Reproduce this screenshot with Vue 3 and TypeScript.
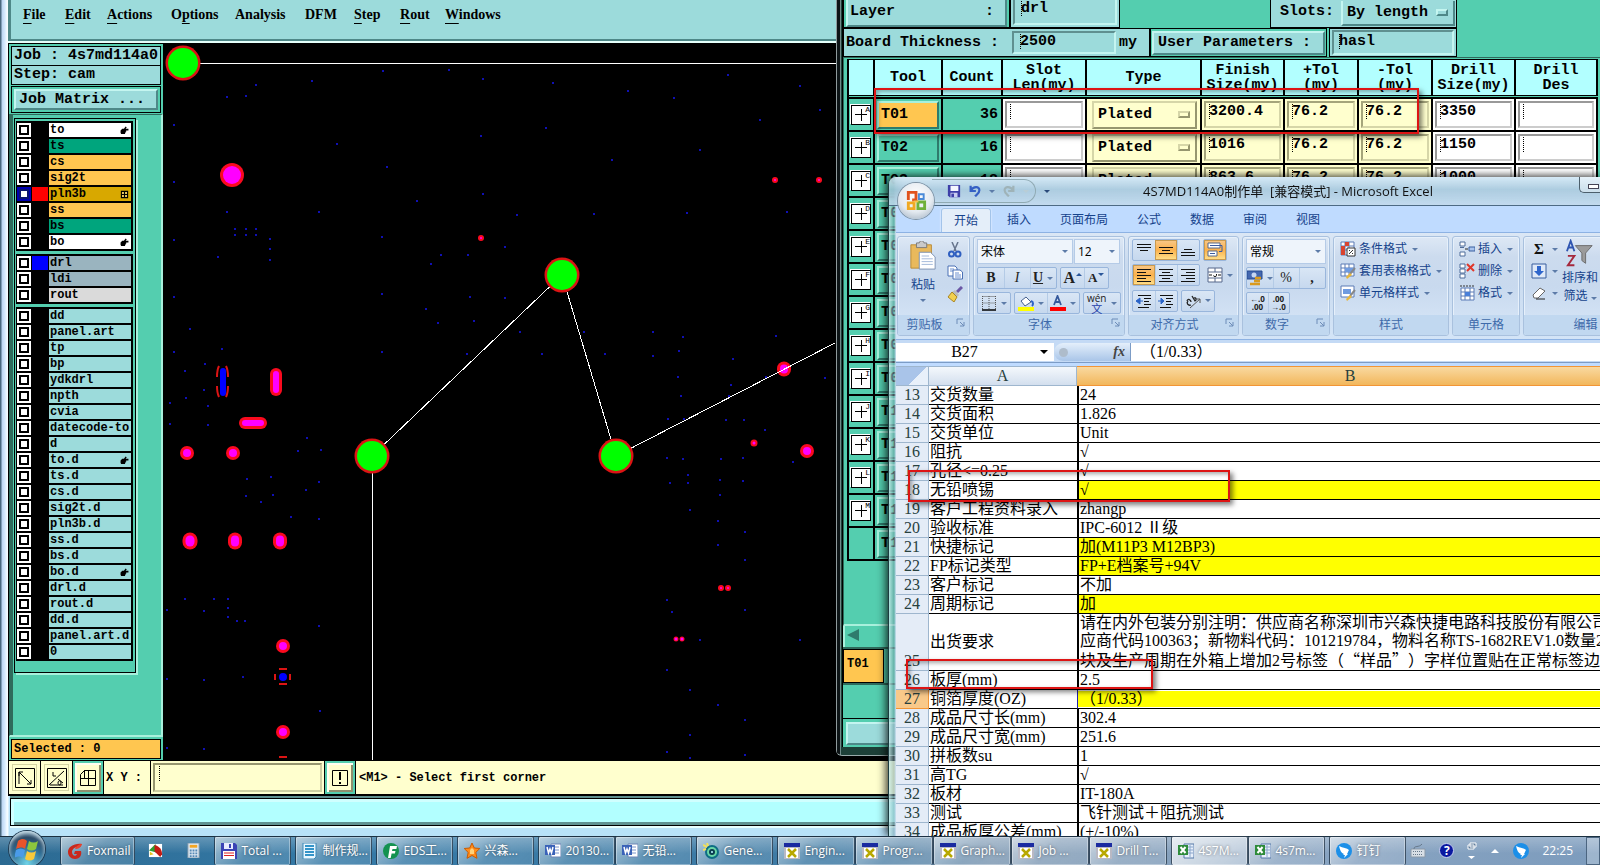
<script setup lang="ts">
interface Layer { name: string; tone: string; swatch?: string; mark?: string }
interface Tool { key: string; id: string; count?: string; finish?: string; drill?: string }
interface Task { label: string; icon: string; on?: boolean }

const menus = [
  ['F', 'ile', ''], ['E', 'dit', ''], ['A', 'ctions', ''], ['p', 'tions', 'O'],
  ['', 'Analysis', ''], ['', 'DFM', ''], ['S', 'tep', ''], ['R', 'out', ''], ['W', 'indows', ''],
]

const plain = (names: string[]): Layer[] => names.map((name) => ({ name, tone: 'aqua' }))

const layerGroups: Layer[][] = [
  [
    { name: 'to', tone: 'white', mark: 'hand' },
    { name: 'ts', tone: 'green' },
    { name: 'cs', tone: 'amber' },
    { name: 'sig2t', tone: 'amber' },
    { name: 'pln3b', tone: 'gold', swatch: 'red', mark: 'grid' },
    { name: 'ss', tone: 'amber' },
    { name: 'bs', tone: 'green' },
    { name: 'bo', tone: 'white', mark: 'hand' },
  ],
  [
    { name: 'drl', tone: 'steel', swatch: 'blue' },
    { name: 'ldi', tone: 'steel' },
    { name: 'rout', tone: 'grey' },
  ],
  [
    ...plain(['dd', 'panel.art', 'tp', 'bp', 'ydkdrl', 'npth', 'cvia', 'datecode-to', 'd']),
    { name: 'to.d', tone: 'aqua', mark: 'hand' },
    ...plain(['ts.d', 'cs.d', 'sig2t.d', 'pln3b.d', 'ss.d', 'bs.d']),
    { name: 'bo.d', tone: 'aqua', mark: 'hand' },
    ...plain(['drl.d', 'rout.d', 'dd.d', 'panel.art.d', '0']),
  ],
]

const holes: number[][] = [
  [227, 97], [246, 96], [256, 85], [312, 81], [383, 71], [449, 70], [483, 79], [174, 125], [337, 144], [481, 136],
  [387, 167], [174, 182], [417, 201], [483, 194], [227, 212], [319, 212], [517, 215], [235, 229], [246, 229], [256, 229],
  [235, 235], [246, 235], [256, 235], [270, 239], [270, 249], [270, 260], [174, 240], [382, 237], [218, 257], [505, 247],
  [441, 255], [468, 255], [431, 264], [174, 297], [382, 294], [190, 329], [174, 352], [222, 349], [382, 352], [205, 364],
  [185, 371], [204, 390], [186, 398], [208, 406], [170, 403], [170, 424], [208, 425], [307, 438], [298, 451], [321, 450],
  [247, 479], [271, 477], [319, 482], [306, 490], [246, 496], [273, 495], [261, 502], [291, 517], [319, 519], [185, 599],
  [214, 599], [228, 599], [228, 608], [228, 617], [237, 621], [245, 621], [167, 610], [204, 611], [319, 626], [167, 679],
  [204, 680], [243, 677], [320, 711], [167, 748], [204, 749], [594, 214], [687, 213], [787, 212], [470, 297], [505, 298],
  [426, 309], [438, 323], [474, 321], [520, 332], [584, 332], [653, 332], [683, 337], [776, 336], [679, 351], [653, 356],
  [467, 354], [542, 354], [605, 354], [733, 359], [678, 377], [825, 378], [731, 385], [766, 377], [729, 396], [681, 396],
  [668, 419], [684, 419], [726, 420], [744, 420], [765, 430], [667, 458], [683, 459], [721, 459], [743, 458], [793, 462],
  [688, 475], [670, 483], [688, 483], [720, 480], [743, 481], [720, 495], [667, 752], [690, 758], [745, 755],
  [553, 83], [628, 91], [674, 98], [728, 75], [800, 86], [546, 128], [612, 160], [700, 150], [760, 120], [820, 110],
  [690, 510], [718, 521], [745, 532], [718, 545], [745, 560], [667, 600], [672, 612], [700, 640], [745, 610], [800, 640],
  [667, 670], [690, 690], [718, 705], [745, 720], [690, 735],
]
const pads = [
  { x: 232, y: 175, w: 24, h: 24, c: 3 }, { x: 276, y: 382, w: 12, h: 28, c: 3 }, { x: 253, y: 423, w: 28, h: 12, c: 3 },
  { x: 187, y: 453, w: 14, h: 14, c: 3 }, { x: 233, y: 453, w: 14, h: 14, c: 3 }, { x: 190, y: 541, w: 15, h: 17, c: 3 },
  { x: 235, y: 541, w: 14, h: 17, c: 3 }, { x: 280, y: 541, w: 14, h: 17, c: 3 }, { x: 283, y: 646, w: 14, h: 14, c: 3 },
  { x: 283, y: 732, w: 14, h: 14, c: 3 }, { x: 784, y: 369, w: 14, h: 15, c: 3 }, { x: 807, y: 451, w: 14, h: 14, c: 3 },
  { x: 481, y: 238, w: 6, h: 6, c: 2 }, { x: 775, y: 180, w: 6, h: 6, c: 2 }, { x: 819, y: 180, w: 6, h: 6, c: 2 },
  { x: 754, y: 443, w: 7, h: 7, c: 2 }, { x: 721, y: 588, w: 6, h: 6, c: 2 }, { x: 728, y: 588, w: 6, h: 6, c: 2 },
  { x: 676, y: 639, w: 5, h: 5, c: 1 }, { x: 682, y: 639, w: 5, h: 5, c: 1 },
]
const nodes = [[183, 63], [562, 275], [372, 456], [616, 456]]

const heads = [[''], ['Tool'], ['Count'], ['Slot', 'Len(my)'], ['Type'], ['Finish', 'Size(my)'], ['+Tol', '(my)'], ['-Tol', '(my)'], ['Drill', 'Size(my)'], ['Drill', 'Des']]
const tools: Tool[] = [
  { key: 'A', id: 'T01', count: '36', finish: '3200.4', drill: '3350' },
  { key: 'B', id: 'T02', count: '16', finish: '1016', drill: '1150' },
  { key: 'C', id: 'T03', count: '18', finish: '863.6', drill: '1000' },
  ...'DEFGHIJKLM'.split('').map((key, i) => ({ key, id: 'T' + String(i + 4).padStart(2, '0') })),
  { key: '', id: 'T14' },
]

const tabs = ['开始', '插入', '页面布局', '公式', '数据', '审阅', '视图']

const sheet = [
  { n: 13, a: '交货数量', b: '24' }, { n: 14, a: '交货面积', b: '1.826' }, { n: 15, a: '交货单位', b: 'Unit' },
  { n: 16, a: '阻抗', b: '√' }, { n: 17, a: '孔径<=0.25', b: '√' }, { n: 18, a: '无铅喷锡', b: '√', y: true },
  { n: 19, a: '客户工程资料录入', b: 'zhangp' }, { n: 20, a: '验收标准', b: 'IPC-6012 Ⅱ级' },
  { n: 21, a: '快捷标记', b: '加(M11P3 M12BP3)', y: true }, { n: 22, a: 'FP标记类型', b: 'FP+E档案号+94V', y: true },
  { n: 23, a: '客户标记', b: '不加' }, { n: 24, a: '周期标记', b: '加', y: true },
  { n: 25, a: '出货要求', b: '请在内外包装分别注明：供应商名称深圳市兴森快捷电路科技股份有限公司\n应商代码100363；新物料代码：101219784，物料名称TS-1682REV1.0数量2\n块及生产周期在外箱上增加2号标签（“样品”）字样位置贴在正常标签边', tall: true },
  { n: 26, a: '板厚(mm)', b: '2.5' }, { n: 27, a: '铜箔厚度(OZ)', b: '（1/0.33）', y: true, sel: true },
  { n: 28, a: '成品尺寸长(mm)', b: '302.4' }, { n: 29, a: '成品尺寸宽(mm)', b: '251.6' }, { n: 30, a: '拼板数su', b: '1' },
  { n: 31, a: '高TG', b: '√' }, { n: 32, a: '板材', b: 'IT-180A' }, { n: 33, a: '测试', b: '飞针测试＋阻抗测试' },
  { n: 34, a: '成品板厚公差(mm)', b: '(+/-10%)' },
]
/* full-width quotes need the CJK face and are split into their own runs */
const runs = (s: string) => s.split(/(（“|”）)/).filter(Boolean)
const wide = (s: string) => /^(（“|”）)$/.test(s)

const taskGroups: Task[][] = [
  [{ label: 'Total ...', icon: 'disk' }],
  [{ label: '制作规...', icon: 'note' }],
  [{ label: 'EDS工...', icon: 'eds' }],
  [{ label: '兴森...', icon: 'star' }],
  [{ label: '20130...', icon: 'word' }, { label: '无铅...', icon: 'word' }],
  [{ label: 'Gene...', icon: 'gene' }],
  [{ label: 'Engin...', icon: 'xwin' }, { label: 'Progr...', icon: 'xwin' }, { label: 'Graph...', icon: 'xwin' }, { label: 'Job ...', icon: 'xwin' }, { label: 'Drill T...', icon: 'xwin' }],
  [{ label: '4S7M...', icon: 'excel', on: true }, { label: '4s7m...', icon: 'excel' }],
  [{ label: '钉钉', icon: 'ding' }],
]

const lines = (ys: number[][]) => ys.map(([x, y, w]) => `<path d="M${x} ${y}.5h${w}" stroke="#111" stroke-width="1"/>`).join('')

const icons: Record<string, string> = {
  hand: '<path d="M1 7l3-3h3l3-4 2 1-2 3h5v3h-4v2h-1v2H9v2H2L1 11z" fill="#000"/>',
  grid: '<path d="M2.5 1.5h11v11h-11zM8 1.500v11M2.500 7h11" fill="#ecc860" stroke="#000" stroke-width="2"/>',
  foxmail: '<path d="M15 1C7 0 1 4 1 9c0 4 3 7 7 7 5 0 7-4 6-8H8l-1 3h3c-1 3-5 2-5-2 0-3 4-6 8-5z" fill="#c9281c"/><path d="M15 1c-3 0-6 2-7 5 3 0 6-1 7-5z" fill="#e8442f"/>',
  rgb: '<path d="M1 1h14v14H1z" fill="#fff"/><path d="M1 8l7-7 1 9z" fill="#2e9e2e"/><path d="M7 2c5 1 8 5 8 10l-2 3-6-6z" fill="#c41c14"/><path d="M2 9l4 3-4 1z" fill="#e6c320"/>',
  calc: '<path d="M2 0h12v16H2z" fill="#dfe9f2" stroke="#7b93a8"/><path d="M4 2h8v3H4z" fill="#f5a623"/><path d="M4 8h8M4 11h8M4 14h8" stroke="#5588b5" stroke-width="2" stroke-dasharray="2 1"/>',
  disk: '<path d="M0 0h14l2 2v14H0z" fill="#3a43b5"/><path d="M3 0h9v6H3z" fill="#e8ecff"/><path d="M8 1h2v4H8z" fill="#3a43b5"/><path d="M2 8h12v8H2z" fill="#fff"/><path d="M3 10h10M3 12.500h10" stroke="#d22"/>',
  note: '<path d="M1 0h13v14l-2 2H1z" fill="#eaf7ff" stroke="#3d8ab8"/><path d="M3 3h9M3 6h9M3 9h9M3 12h9" stroke="#3494c9" stroke-width="2"/>',
  eds: '<circle cx="8" cy="8" r="8" fill="#149250"/><path d="M5 15L7 3h7l-.6 3H9.500L9 8h3.500l-.6 2.600H8.600L7.700 15z" fill="#fff"/>',
  star: '<path d="M8 0l2.300 5 5.500.5-4 3.900 1.200 5.900L8 12.500l-5 2.800 1.200-5.900-4-3.900L5.700 5z" fill="#ff8c1a" stroke="#c95a00"/><path d="M6 7l2-2 2 2v4H6z" fill="#ffd27a"/>',
  word: '<path d="M6 1h10v13H6z" fill="#fff" stroke="#6f86b6"/><path d="M8 4h6M8 7h6M8 10h6" stroke="#7d96cc"/><path d="M0 2h10v10H0z" fill="#3a62b8"/><path d="M2 4l1.500 6L5 6l1.500 4L8 4" fill="none" stroke="#fff" stroke-width="1.500"/>',
  gene: '<circle cx="9" cy="9" r="7" fill="#0e6d84"/><circle cx="9" cy="9" r="5" fill="#69d6a6"/><circle cx="9" cy="9" r="3" fill="#0a3b50"/><circle cx="9" cy="9" r="1" fill="#bff"/><path d="M0 2l4 2M4 0l1 3M0 7l3-1" stroke="#f3e15a" stroke-width="2"/>',
  xwin: '<path d="M0 0h16v16H0z" fill="#b9b9c4"/><path d="M0 0h16v4H0z" fill="#1a2ba0"/><path d="M2 5h12v10H2z" fill="#fff"/><path d="M4 6l8 8M12 6l-8 8" stroke="#b8a800" stroke-width="2.500"/>',
  excel: '<path d="M6 1h10v14H6z" fill="#e8f0fb" stroke="#5578a8"/><path d="M8 4h7M8 7h7M8 10h7M12 2v12" stroke="#8aa6cc"/><path d="M0 2h10v10H0z" fill="#2e8b3a"/><path d="M2.500 4l5 6M7.500 4l-5 6" stroke="#fff" stroke-width="2"/>',
  ding: '<circle cx="8" cy="8" r="8" fill="#1c8fe8"/><path d="M3 3c4 2 8 2 10 4-1 1-1 3-2 4l1 0-4 4 1-3H7l1-1C5 10 4 7 3 3z" fill="#fff"/>',
  save: '<path d="M1 1h14v14H3l-2-2z" fill="#3d3fa8"/><path d="M4 2h9v6H4z" fill="#f4f6ff"/><path d="M4 10h8v5H4z" fill="#c9cdf0"/><path d="M5 11h3v4H5z" fill="#3d3fa8"/>',
  undo: '<path d="M3 2v6h6M3.500 7C6 3 13 2 13 7c0 4-3 5-5 7" fill="none" stroke="#3560c4" stroke-width="2.500"/>',
  redo: '<path d="M13 2v6H7M12.500 7C10 3 3 2 3 7c0 4 3 5 5 7" fill="none" stroke="#9fb3b8" stroke-width="2.500"/>',
  paste: '<path d="M2 4h22v25H2z" fill="#e9b95c" stroke="#b98a35"/><path d="M8 2h3c0-3 5-3 5 0h3v5H8z" fill="#c9c9c9" stroke="#777"/><path d="M11 12h12l5 5v13H11z" fill="#fff" stroke="#7a8fb0"/><path d="M13.500 16h8M13.500 19h12M13.500 22h12M13.500 25h12" stroke="#9fb6d8"/>',
  cut: '<path d="M5 0l4 9M11 0L7 9" stroke="#66748c" stroke-width="1.500"/><circle cx="4.500" cy="12" r="2.500" fill="none" stroke="#2f5fc0" stroke-width="2"/><circle cx="11" cy="12" r="2.500" fill="none" stroke="#2f5fc0" stroke-width="2"/>',
  copy: '<path d="M1 2h7l2 2v8H1z" fill="#fff" stroke="#4a70b5"/><path d="M3 5h4M3 7h4" stroke="#6c90d0"/><path d="M6 6h7l2.500 2v7H6z" fill="#fff" stroke="#4a70b5"/><path d="M8 9h4M8 11h6M8 13h6" stroke="#6c90d0"/>',
  brush: '<path d="M15 1l-5 5" stroke="#6a57a5" stroke-width="3"/><path d="M8 4l4 5-2 2-5-5z" fill="#bbb"/><path d="M5 6l5 5-3 5-6-5z" fill="#f2cf4f" stroke="#a98524"/>',
  border: '<path d="M1.500 1.500h13M1.500 8h13M1.500 1v13M8 1v13M14.500 1v13" stroke="#555" stroke-dasharray="1 1" fill="none"/><path d="M1 15h14" stroke="#000" stroke-width="1.500"/>',
  fill: '<path d="M3 6l5-4 5 5-6 4z" fill="#fff" stroke="#46618f"/><path d="M13 6c3 1 2 4 1 5" fill="none" stroke="#2e63c7" stroke-width="2"/><path d="M0 12h16v4H0z" fill="#ff0"/>',
  ink: '<path d="M4 10L7.500 1 11 10M5.500 7h4" fill="none" stroke="#35599c" stroke-width="1.800"/><path d="M0 12h16v4H0z" fill="#f00"/>',
  top: lines([[1, 2, 14], [1, 5, 14], [4, 8, 8]]),
  mid: lines([[1, 5, 14], [4, 8, 8], [1, 11, 14]]),
  bot: lines([[4, 7, 8], [1, 10, 14], [1, 13, 14]]),
  left: lines([[1, 2, 14], [1, 5, 9], [1, 8, 14], [1, 11, 9], [1, 14, 14]]),
  center: lines([[1, 2, 14], [4, 5, 8], [1, 8, 14], [4, 11, 8], [1, 14, 14]]),
  right: lines([[1, 2, 14], [6, 5, 9], [1, 8, 14], [6, 11, 9], [1, 14, 14]]),
  outdent: lines([[2, 2, 13], [8, 5, 7], [8, 8, 5], [8, 11, 7], [2, 14, 11]]) + '<path d="M0 8l4-3v6zM3 8h4" fill="#2a64c8" stroke="#2a64c8"/>',
  indent: lines([[2, 2, 13], [8, 5, 7], [8, 8, 5], [8, 11, 7], [2, 14, 11]]) + '<path d="M6 8L3 5v6zM0 8h4" fill="#2a64c8" stroke="#2a64c8"/>',
  wrap: '<path d="M1 1h12v5H1zM1 9h9v5H1z" fill="#fff" stroke="#56698c"/><path d="M3 3.500h12v6h-3M3 11.500h5" fill="none" stroke="#3a5aa0"/>',
  merge: '<path d="M1 1h14v14H1zM8 1v4M8 11v4M1 5h14M1 11h14" fill="#fff" stroke="#56698c"/><path d="M2 8h3M11 8h3M6.500 8.500a1.500 1 0 1 0 3 0V7" fill="none" stroke="#111"/>',
  orient: '<path d="M2 8c1-3 4-1 4 1M6 12c-3 1-5-2-3-4M7 3l3 5c2-1 1-4-1-3" fill="none" stroke="#222" stroke-width="1.300"/><path d="M5 15L15 6m0 0h-4m4 0v4" stroke="#555" fill="none"/>',
  money: '<path d="M0 1h15v8H0z" fill="#4468b0" stroke="#274a90"/><circle cx="7" cy="5" r="2.500" fill="#c6d6f2"/><path d="M8 8h6M7 11h6M3 14h10" stroke="#d99a1e" stroke-width="2.500"/>',
  cond: '<path d="M1 1h13v13H1zM5 1v13M9 1v13M1 5h13M1 9h13" fill="#fff" stroke="#5b7bb5"/><path d="M5 1h4v4H5zM1 5h4v9H1z" fill="#d8432f"/><path d="M7 7h8v8H7z" fill="#fff" stroke="#333"/><path d="M9 13l4-4M9 9.500h1M12 12.500h1" stroke="#333"/>',
  tfmt: '<path d="M1 1h13v12H1zM5 1v12M9 1v12M1 5h13M1 9h13" fill="#fff" stroke="#5b7bb5"/><path d="M5 5h9v4H5z" fill="#6f9be0"/><path d="M15 5l-5 6" stroke="#888" stroke-width="2"/><path d="M10 10l2 2-5 4-1-2z" fill="#e8b63a"/>',
  cfmt: '<path d="M1 1h13v11H1z" fill="#fff" stroke="#5b7bb5"/><path d="M3 4h8v5H3z" fill="#6f9be0"/><path d="M15 5l-5 6" stroke="#888" stroke-width="2"/><path d="M10 10l2 2-5 4-1-2z" fill="#e8b63a"/>',
  ins: '<path d="M1 1h5v4H1zM1 11h5v4H1z" fill="#fff" stroke="#4f6c9a"/><path d="M1 6.500h4" stroke="#4f6c9a"/><path d="M6 8h3" stroke="#222"/><path d="M10 6h6v4h-6z" fill="#a9c4ee" stroke="#385f9f"/>',
  del: '<path d="M1 1h5v4H1zM1 6h5v4H1zM1 11h5v4H1z" fill="#fff" stroke="#4f6c9a"/><path d="M8 1l7 7M15 1L8 8" stroke="#e0372a" stroke-width="2"/>',
  fmt: '<path d="M2 3h13v12H2zM2 7h13M2 11h13M6 3v12M11 3v12" fill="#fff" stroke="#5b7bb5"/><path d="M6 7h5v4H6z" fill="#4a7fd8"/><path d="M1 1h15" stroke="#333" stroke-dasharray="2 1"/>',
  down: '<path d="M1 1h14v14H1z" fill="#dfe9f8" stroke="#385f9f"/><path d="M6 3h4v5h3l-5 5-5-5h3z" fill="#2f66cc"/>',
  erase: '<path d="M2 10l7-7 5 3-7 7-4 0z" fill="#fff" stroke="#666"/><path d="M5 14h9" stroke="#222"/>',
  sort: '<path d="M1 12L5 1l4 11M3 8h4" fill="none" stroke="#2f55b0" stroke-width="2"/><path d="M2 17h7L2 27h7" fill="none" stroke="#a5283c" stroke-width="2"/><path d="M10 6h18l-7 8v11l-4-3v-8z" fill="#9b9b9b" stroke="#6b6b6b"/>',
  launch: '<path d="M1 6V1h6" fill="none" stroke="#6d8cb8"/><path d="M4 4l4 4M8 4v4H4" fill="none" stroke="#6d8cb8"/>',
  flag: '<path d="M2 6c4-3 7-2 9 0l-2 8c-2-2-5-2-9 0z" fill="#e8542a"/><path d="M13 6c3 2 6 2 9 0l-2 8c-3 2-6 2-9 0z" fill="#8cc63e"/><path d="M0 15c3-2 6-2 9 0l-2 8c-3-2-5-2-9 0z" fill="#4a9be8"/><path d="M11 16c3 2 6 2 9 0l-2 8c-3 2-6 2-9 0z" fill="#f8c93a"/>',
  office: '<path d="M4.500 11.500v-8h8v8h-4" fill="none" stroke="#e0531e" stroke-width="3"/><path d="M15.500 5.500h5v5h-5z" fill="none" stroke="#4a8ad8" stroke-width="2"/><path d="M4.500 14.500h6v6h-6z" fill="none" stroke="#f0a922" stroke-width="3"/><path d="M14.500 13.500h7v7h-7z" fill="none" stroke="#6fb03a" stroke-width="3"/><path d="M10 12h5v2h-5z" fill="#f6c34a"/>',
  keyb: '<path d="M1 6h14v8H1z" fill="#d8dfe6" stroke="#8a99a8"/><path d="M3 8.500h10M3 11.500h10" stroke="#66788a" stroke-dasharray="1 1"/><path d="M4 6c0-4 5-1 8-5" fill="none" stroke="#66788a"/>',
}
</script>

<template>
  <div class="desktop">
    <main class="workspace">
      <section class="genesis" aria-label="Graphic editor">
        <nav class="menubar">
          <a v-for="m in menus" :key="m.join('')" href="#">{{ m[2] }}<u>{{ m[0] }}</u>{{ m[1] }}</a>
        </nav>
        <div class="body">
          <aside class="side">
            <div class="job">
              <div class="jobline">Job : 4s7md114a0</div>
              <div class="jobline">Step: cam</div>
            </div>
            <div class="matrix"><button type="button">Job Matrix ...</button></div>
            <div class="layers">
              <div class="layerbox">
                <div v-for="(g, gi) in layerGroups" :key="gi" class="group">
                  <div v-for="l in g" :key="l.name" class="layer">
                    <input :id="'ly-' + l.name" type="checkbox" :class="{ work: l.swatch === 'red' }">
                    <span class="swatch" :class="l.swatch"></span>
                    <label :for="'ly-' + l.name" :class="l.tone">{{ l.name }}<svg v-if="l.mark" viewBox="0 0 16 14" v-html="icons[l.mark]"></svg></label>
                  </div>
                </div>
              </div>
            </div>
            <div class="selected"><div>Selected : 0</div></div>
          </aside>
          <svg class="canvas">
            <g transform="translate(-163 -43)">
              <rect v-for="(p, i) in holes" :key="i" :x="p[0] - 1" :y="p[1] - 1" width="2" height="2" fill="#1010b4" />
              <g v-for="(p, i) in pads" :key="'p' + i">
                <rect :x="p.x - p.w / 2" :y="p.y - p.h / 2" :width="p.w" :height="p.h" :rx="Math.min(p.w, p.h) / 2" fill="#fa0a1e" />
                <rect :x="p.x - p.w / 2 + p.c" :y="p.y - p.h / 2 + p.c" :width="p.w - p.c * 2" :height="p.h - p.c * 2" :rx="Math.min(p.w, p.h) / 2 - p.c" fill="#f0f" />
              </g>
              <rect x="220" y="368" width="6" height="28" rx="3" fill="#00f" />
              <path d="M219 366q-2 4-2 11M217 386q0 7 2 11M226 366q2 4 2 11M228 386q0 7-2 11" fill="none" stroke="#dc1414" stroke-width="2" />
              <circle cx="283" cy="677" r="4" fill="#00f" />
              <path d="M279 669h8M279 684h8M275 674v6M290 674v6M279 757h8" stroke="#dc1414" stroke-width="2" />
              <path d="M183 63.500H2000M372.500 456V900M372 456L562 275L616 456L835 343" fill="none" stroke="#fff" shape-rendering="crispEdges" />
              <g v-for="(n, i) in nodes" :key="'n' + i">
                <circle :cx="n[0]" :cy="n[1]" r="17.5" fill="#dc1414" />
                <circle :cx="n[0]" :cy="n[1]" r="15" fill="#0f0" />
              </g>
            </g>
          </svg>
        </div>
        <div class="status">
          <button type="button" aria-label="Zoom area"><svg viewBox="0 0 20 20"><path d="M.5.5h19v19H.5zM4 16V4l12 12M4 8V4h4M16 12v4h-4" fill="none" stroke="#000" /></svg></button>
          <button type="button" aria-label="Angle snap"><svg viewBox="0 0 20 20"><path d="M.5.5h19v19H.5zM2 17L17 3M6 4v4h3M3 17h13M11 11l5 4M11 15c0-3 3-3 3 0s-3 2-3 0" fill="none" stroke="#000" /></svg></button>
          <button type="button" class="green" aria-label="Grid snap"><svg viewBox="0 0 20 20"><path d="M2.500 6.500l4-4h11v15h-15zM10.500 2v16M2 10.500h16M6.500 2v8" fill="none" stroke="#000" /></svg></button>
          <label class="xy" for="xy">X Y :</label>
          <div class="xyfield"><span class="well"><i class="caret"></i><input id="xy" type="text"></span></div>
          <button type="button" class="green" aria-label="Apply"><svg viewBox="0 0 20 20"><path d="M2.500 2.500h15v15h-15z" fill="none" stroke="#000" /><path d="M10 4v8M10 14v2" stroke="#000" stroke-width="2" /></svg></button>
          <p>&lt;M1&gt; - Select first corner</p>
        </div>
        <div class="message"></div>
      </section>

      <section class="drill" aria-label="Drill tools manager">
        <div class="pane">
          <div class="row first">
            <div class="cell layerlabel"><button type="button"><span>Layer</span><span>:</span></button></div>
            <div class="cell entry layerentry"><span class="well"><i class="caret"></i><input type="text" value="drl" aria-label="Layer"></span></div>
            <div class="cell slots">
              <label for="slots">Slots:</label>
              <span class="option"><select id="slots"><option>By length</option></select><b></b></span>
            </div>
          </div>
          <div class="row second">
            <div class="cell thick">
              <label for="bt">Board Thickness :</label>
              <span class="well"><i class="caret"></i><input id="bt" type="text" value="2500"></span>my
            </div>
            <div class="cell params"><button type="button">User Parameters :</button></div>
            <div class="cell entry paramentry"><span class="well"><i class="caret"></i><input type="text" value="hasl" aria-label="User parameters"></span></div>
          </div>
          <div class="tablewrap">
            <table class="tools">
              <colgroup>
                <col class="c26"><col class="c68"><col class="c60"><col class="c84"><col class="c115">
                <col class="c83"><col class="c74"><col class="c74"><col class="c83"><col class="c82">
              </colgroup>
              <thead>
                <tr><th v-for="(h, i) in heads" :key="i"><div v-for="t in h" :key="t">{{ t }}</div></th></tr>
              </thead>
              <tbody>
                <tr class="gap"><td colspan="10"></td></tr>
                <tr v-for="(t, i) in tools" :key="t.id">
                  <td><span v-if="t.key" class="sym"><small>{{ t.key }}</small></span></td>
                  <td><button type="button" class="tool" :class="{ cur: i === 0 }">{{ t.id }}</button></td>
                  <template v-if="t.count">
                    <td class="num">{{ t.count }}</td>
                    <td class="w"><span class="well"><i class="caret"></i><input type="text" aria-label="Slot length"></span></td>
                    <td class="y"><span class="option"><select aria-label="Type"><option>Plated</option></select><b></b></span></td>
                    <td class="y"><span class="well"><i class="caret"></i><input type="text" :value="t.finish" aria-label="Finish size"></span></td>
                    <td class="y"><span class="well"><i class="caret"></i><input type="text" value="76.2" aria-label="Plus tolerance"></span></td>
                    <td class="y"><span class="well"><i class="caret"></i><input type="text" value="76.2" aria-label="Minus tolerance"></span></td>
                    <td class="w"><span class="well"><i class="caret"></i><input type="text" :value="t.drill" aria-label="Drill size"></span></td>
                    <td class="w"><span class="well"><i class="caret"></i><input type="text" aria-label="Drill designator"></span></td>
                  </template>
                </tr>
              </tbody>
            </table>
          </div>
          <div class="hscroll"><i></i></div>
          <div class="current"><span>T01</span></div>
          <div class="blank"></div>
          <div class="closebar"><button type="button" aria-label="Close"></button></div>
        </div>
      </section>

      <section class="excel" aria-label="Microsoft Excel">
        <header class="title">
          <button type="button" class="orb" aria-label="Office"><svg viewBox="0 0 25 25" v-html="icons.office"></svg></button>
          <div class="qat">
            <button type="button" aria-label="保存"><svg viewBox="0 0 16 16" v-html="icons.save"></svg></button>
            <button type="button" aria-label="撤消"><svg viewBox="0 0 16 16" v-html="icons.undo"></svg></button>
            <i class="dd"></i>
            <button type="button" aria-label="恢复"><svg viewBox="0 0 16 16" v-html="icons.redo"></svg></button>
            <i class="dd faint"></i>
          </div>
          <i class="dd more"></i>
          <h1>4S7MD114A0制作单&nbsp; [兼容模式] - Microsoft Excel</h1>
          <button type="button" class="min" aria-label="最小化"><i></i></button>
        </header>
        <div class="frame">
          <nav class="tabs"><a v-for="(t, i) in tabs" :key="t" href="#" :class="{ on: i === 0 }">{{ t }}</a></nav>
          <div class="ribbon">
            <div class="rg clip">
              <div class="rc">
                <button type="button" class="big"><svg class="i30" viewBox="0 0 30 32" v-html="icons.paste"></svg>粘贴<i class="dd"></i></button>
                <div class="stack">
                  <button type="button" aria-label="剪切"><svg viewBox="0 0 16 16" v-html="icons.cut"></svg></button>
                  <button type="button" aria-label="复制"><svg viewBox="0 0 16 16" v-html="icons.copy"></svg></button>
                  <button type="button" aria-label="格式刷"><svg viewBox="0 0 16 16" v-html="icons.brush"></svg></button>
                </div>
              </div>
              <footer class="l">剪贴板<svg viewBox="0 0 9 9" v-html="icons.launch"></svg></footer>
            </div>
            <div class="rg font">
              <div class="rc rows">
                <div class="line joined">
                  <span class="combo fname"><select aria-label="字体"><option>宋体</option></select><i class="dd"></i></span>
                  <span class="combo fsize"><select aria-label="字号"><option>12</option></select><i class="dd"></i></span>
                </div>
                <div class="line">
                  <div class="bar b80"><button type="button"><b>B</b></button><button type="button"><em>I</em></button><button type="button"><u><b>U</b></u><i class="dd"></i></button></div>
                  <div class="bar"><button type="button" aria-label="增大字号"><b class="ga">A</b><i class="du"></i></button><button type="button" aria-label="减小字号"><b class="gb">A</b><i class="du dn"></i></button></div>
                </div>
                <div class="line">
                  <div class="bar"><button type="button" aria-label="边框"><svg viewBox="0 0 16 16" v-html="icons.border"></svg><i class="dd"></i></button></div>
                  <div class="bar"><button type="button" aria-label="填充颜色"><svg viewBox="0 0 16 16" v-html="icons.fill"></svg><i class="dd"></i></button><button type="button" aria-label="字体颜色"><svg viewBox="0 0 16 16" v-html="icons.ink"></svg><i class="dd"></i></button></div>
                  <div class="bar"><button type="button"><span class="wen"><span>wén</span>文</span><i class="dd"></i></button></div>
                </div>
              </div>
              <footer class="l">字体<svg viewBox="0 0 9 9" v-html="icons.launch"></svg></footer>
            </div>
            <div class="rg align">
              <div class="rc rows">
                <div class="line">
                  <div class="bar"><button type="button" aria-label="顶端对齐"><svg viewBox="0 0 16 16" v-html="icons.top"></svg></button><button type="button" class="hot" aria-label="垂直居中"><svg viewBox="0 0 16 16" v-html="icons.mid"></svg></button><button type="button" aria-label="底端对齐"><svg viewBox="0 0 16 16" v-html="icons.bot"></svg></button></div>
                  <div class="bar"><button type="button" class="hot" aria-label="自动换行"><svg viewBox="0 0 16 16" v-html="icons.wrap"></svg></button></div>
                </div>
                <div class="line">
                  <div class="bar"><button type="button" class="hot" aria-label="左对齐"><svg viewBox="0 0 16 16" v-html="icons.left"></svg></button><button type="button" aria-label="居中"><svg viewBox="0 0 16 16" v-html="icons.center"></svg></button><button type="button" aria-label="右对齐"><svg viewBox="0 0 16 16" v-html="icons.right"></svg></button></div>
                  <div class="bar bare"><button type="button" aria-label="合并"><svg viewBox="0 0 16 16" v-html="icons.merge"></svg><i class="dd"></i></button></div>
                </div>
                <div class="line">
                  <div class="bar"><button type="button" aria-label="减少缩进"><svg viewBox="0 0 16 16" v-html="icons.outdent"></svg></button><button type="button" aria-label="增加缩进"><svg viewBox="0 0 16 16" v-html="icons.indent"></svg></button></div>
                  <div class="bar"><button type="button" aria-label="方向"><svg viewBox="0 0 16 16" v-html="icons.orient"></svg><i class="dd"></i></button></div>
                </div>
              </div>
              <footer class="l">对齐方式<svg viewBox="0 0 9 9" v-html="icons.launch"></svg></footer>
            </div>
            <div class="rg number">
              <div class="rc rows">
                <div class="line"><span class="combo fnum"><select aria-label="数字格式"><option>常规</option></select><i class="dd"></i></span></div>
                <div class="line"><div class="bar wide"><button type="button" aria-label="会计数字格式"><svg viewBox="0 0 16 16" v-html="icons.money"></svg><i class="dd"></i></button><button type="button">%</button><button type="button"><b>,</b></button></div></div>
                <div class="line"><div class="bar"><button type="button" class="dec"><span>←.0<br>.00</span></button><button type="button" class="dec"><span>.00<br>→.0</span></button></div></div>
              </div>
              <footer class="l">数字<svg viewBox="0 0 9 9" v-html="icons.launch"></svg></footer>
            </div>
            <div class="rg styles">
              <div class="rc list">
                <button type="button"><svg viewBox="0 0 16 16" v-html="icons.cond"></svg>条件格式<i class="dd"></i></button>
                <button type="button"><svg viewBox="0 0 16 16" v-html="icons.tfmt"></svg>套用表格格式<i class="dd"></i></button>
                <button type="button"><svg viewBox="0 0 16 16" v-html="icons.cfmt"></svg>单元格样式<i class="dd"></i></button>
              </div>
              <footer>样式</footer>
            </div>
            <div class="rg cells">
              <div class="rc list">
                <button type="button"><svg viewBox="0 0 16 16" v-html="icons.ins"></svg>插入<i class="dd"></i></button>
                <button type="button"><svg viewBox="0 0 16 16" v-html="icons.del"></svg>删除<i class="dd"></i></button>
                <button type="button"><svg viewBox="0 0 16 16" v-html="icons.fmt"></svg>格式<i class="dd"></i></button>
              </div>
              <footer>单元格</footer>
            </div>
            <div class="rg edit">
              <div class="rc">
                <div class="list">
                  <button type="button"><b class="sigma">Σ</b><i class="dd"></i></button>
                  <button type="button" aria-label="填充"><svg viewBox="0 0 16 16" v-html="icons.down"></svg><i class="dd"></i></button>
                  <button type="button" aria-label="清除"><svg viewBox="0 0 16 16" v-html="icons.erase"></svg><i class="dd"></i></button>
                </div>
                <button type="button" class="big"><svg class="i30" viewBox="0 0 30 30" v-html="icons.sort"></svg>排序和<span>筛选 <i class="dd"></i></span></button>
              </div>
              <footer>编辑</footer>
            </div>
          </div>
          <div class="formula">
            <div class="namebox"><input type="text" value="B27" aria-label="名称框"><i class="dd dark"></i></div>
            <div class="fx"><i></i><em>fx</em></div>
            <input class="fin" type="text" value="（1/0.33）" aria-label="编辑栏">
          </div>
          <div class="grid">
            <table>
              <colgroup><col class="cn"><col class="ca"><col></colgroup>
              <thead><tr><th class="corner"></th><th>A</th><th class="hotcol">B</th></tr></thead>
              <tbody>
                <tr v-for="r in sheet" :key="r.n" :class="{ tall: r.tall, sel: r.sel }">
                  <th>{{ r.n }}</th><td>{{ r.a }}</td><td class="b" :class="{ hl: r.y }"><span v-for="(s, i) in runs(r.b)" :key="i" :class="{ cjk: wide(s) }">{{ s }}</span></td>
                </tr>
              </tbody>
            </table>
          </div>
        </div>
      </section>

      <i class="mark m1"></i><i class="mark m2"></i><i class="mark m3"></i>
    </main>

    <footer class="taskbar">
      <button type="button" class="start" aria-label="开始菜单"><svg viewBox="-1 3 24 22" v-html="icons.flag"></svg></button>
      <button type="button" class="task"><svg viewBox="0 0 16 16" v-html="icons.foxmail"></svg>Foxmail</button>
      <button type="button" class="pin" aria-label="Palette"><svg viewBox="0 0 16 16" v-html="icons.rgb"></svg></button>
      <button type="button" class="pin" aria-label="Calculator"><svg viewBox="0 0 16 16" v-html="icons.calc"></svg></button>
      <div v-for="(g, gi) in taskGroups" :key="gi" class="tg">
        <button v-for="t in g" :key="t.label" type="button" class="task" :class="{ on: t.on }"><svg viewBox="0 0 16 16" v-html="icons[t.icon]"></svg>{{ t.label }}</button>
      </div>
      <div class="tray">
        <svg viewBox="0 0 16 16" v-html="icons.keyb"></svg>
        <span class="help">?</span>
        <svg class="lang" viewBox="0 0 10 18"><path d="M3 1h6v4H3zM1 3h6v4H1z" fill="#5f7c9c" stroke="#fff" /><path d="M1 14h7l-3.500 3z" fill="#fff" /></svg>
        <svg class="up" viewBox="0 0 10 6"><path d="M1 5l4-4 4 4z" fill="#fff" /></svg>
        <svg viewBox="0 0 16 16" v-html="icons.ding"></svg>
        <time>22:25</time>
        <button type="button" class="peek" aria-label="显示桌面"></button>
      </div>
    </footer>
  </div>
</template>

<style>
html, body { margin: 0; background: #000; overflow: hidden; }
</style>

<style scoped>
* { box-sizing: border-box; }
button, input, select { margin: 0; padding: 0; border: 0; background: none; font: inherit; color: inherit; appearance: none; border-radius: 0; min-width: 0; }
a { color: inherit; text-decoration: none; }
svg { display: block; flex: none; }
.desktop { --green: #54ceaf; --aqua: #9cdbdb; --cyan: #b2ffff; --cream: #ffffce; --hi: #c4f5f0; --lo: #4e8888; display: flex; flex-direction: column; height: 100vh; overflow: hidden; font: bold 15px/18px "Liberation Mono", monospace; color: #000; }
.workspace { position: relative; flex: 1; min-height: 0; overflow: hidden; }

/* graphic editor */
.genesis { position: absolute; inset: 0; display: flex; flex-direction: column; padding: 0 0 10px 8px; background: linear-gradient(90deg, #4a6a80 0 1px, #bcd6f2 2px, #d8ecff 5px, #f4fcff 7px, #f4fcff 8px, #b8e2f8 9px); }
.menubar { display: grid; grid-template-columns: 42px 42px 64px 64px 70px 49px 46px 45px auto; justify-content: start; height: 43px; padding: 6px 0 0 15px; background: var(--aqua); border-bottom: 2px solid #e4fffa; box-shadow: inset 3px 0 var(--lo), inset 0 -2px var(--lo); font: bold 14px/18px "Liberation Serif", serif; }
.menubar u { text-underline-offset: 4px; }
.body { flex: 1; display: flex; min-height: 0; }
.side { width: 155px; display: flex; flex-direction: column; background: var(--green); border-left: 1px solid #000; flex: none; border-top: 1px solid #000; }
.job { margin: 2px 2px 0; border: 1px solid #000; background: var(--aqua); }
.jobline { height: 18px; line-height: 18px; padding-left: 2px; white-space: pre; }
.jobline + .jobline { border-top: 1px solid #000; height: 19px; }
.matrix { margin: 1px 2px; padding: 2px; border: 1px solid #000; }
.matrix button { display: block; width: 100%; height: 21px; padding-left: 3px; text-align: left; background: var(--aqua); border: 2px solid var(--hi); border-color: var(--hi) var(--lo) var(--lo) var(--hi); line-height: 16px; }
.layers { flex: 1; min-height: 0; padding: 3px 0 0 4px; border: 2px solid #2f6b5c; border-width: 1px 2px 2px 1px; border-color: #2f6b5c #a8f0dc #a8f0dc #2f6b5c; box-shadow: inset 3px 0 #2f6b5c; }
.layerbox { width: 122px; padding: 2px 2px 11px 1px; border: 1px solid #000; box-shadow: 2px 2px #a8f0dc; }
.group { padding: 1px 2px 1px 1px; background: #000; margin-bottom: 3px; }
.group:last-child { margin: 0; }
.layer { display: flex; height: 16px; align-items: center; gap: 1px; }
.layer input { width: 14px; height: 14px; background: #fff; border: 2px solid #fff; box-shadow: inset 0 0 0 2px #000; flex: none; }
.layer input.work { border-color: #0000b0; box-shadow: inset 0 0 0 2px #0a1470; }
.swatch { width: 16px; height: 14px; flex: none; }
.red { background: #f00; } .blue { background: #00f; }
.layer label { flex: 1; display: flex; align-items: center; justify-content: space-between; height: 14px; padding-left: 1px; font-size: 12px; line-height: 14px; white-space: nowrap; }
.layer label svg { width: 9px; height: 9px; margin-right: 2px; }
.aqua { background: var(--aqua); } .white { background: #fff; } .layer .green { background: #00a57d; } .amber { background: #ffc650; } .gold { background: #d8a800; } .steel { background: #9ab4bf; } .grey { background: #dadada; }
.selected { padding: 2px 2px 1px; }
.selected div { height: 20px; padding-left: 2px; border: 1px solid #000; background: #ffc650; font-size: 12px; line-height: 18px; }
.canvas { flex: 1; min-width: 0; height: 100%; background: #000; }
.status { display: flex; height: 36px; border: solid #000; border-width: 1px 0 2px 1px; background: #000; font-size: 12px; gap: 1px; flex: none; }
.status button { width: 31px; display: grid; place-items: center; background: var(--cream); box-shadow: inset 0 0 0 3px var(--cream), inset 4px 4px #d5d5a4, inset -4px -4px #d5d5a4; }
.status button.green { width: 30px; box-shadow: inset 0 0 0 2px var(--green), inset 4px 4px #fffff0, inset -4px -4px #8f8f6d; }
.status button svg { width: 20px; height: 20px; }
.xy { width: 46px; padding-left: 2px; background: var(--cream); line-height: 34px; }
.xyfield { width: 173px; padding: 2px; background: var(--cream); }
.xyfield .well { height: 29px; border-color: #96966f #d0d0a2 #d0d0a2 #96966f; }
.status p { flex: 1; margin: 0; padding-left: 3px; line-height: 34px; background: var(--cream); overflow: hidden; }
.message { height: 28px; flex: none; margin: 2px 0 0 2px; border: 1px solid #000; background: var(--cyan); box-shadow: inset 0 3px #d0ffff, inset 3px 0 #d0ffff, inset 0 -3px #5f9292, 0 -2px #5f9090, 0 2px #e8ffff; }

.well { display: flex; flex: 1; min-width: 0; align-items: flex-start; padding: 1px 0 0 3px; border: 2px solid; border-color: #5f9090 #c4f5f0 #c4f5f0 #5f9090; overflow: hidden; }
.well input { flex: 1; width: 100%; height: 16px; line-height: 16px; }
.caret { width: 3px; height: 15px; margin-right: -2px; flex: none; background: linear-gradient(90deg, transparent 1px, #000 1px 2px, transparent 2px); -webkit-mask: repeating-linear-gradient(#000 0 1px, transparent 1px 2px); mask: repeating-linear-gradient(#000 0 1px, transparent 1px 2px); }

/* drill tool manager */
.drill { position: absolute; left: 836px; right: 0; top: 0; bottom: 80px; padding: 0 0 8px 6px; background: linear-gradient(90deg, #8f9a9c 0 1px, #0d1416 1px 4px, #6f8a88 4px 5px, #1d4038 5px); border-bottom: 1px solid #9aa; border-radius: 0 0 0 6px; }
.pane { height: 100%; background: var(--green); border-left: 1px solid #000; display: flex; flex-direction: column; overflow: hidden; }
.row { display: flex; flex: none; }
.cell { border: 1px solid #000; display: flex; align-items: center; background: var(--aqua); }
.first { height: 28px; }
.first .cell { border-top: 0; }
.layerlabel { width: 167px; background: var(--green); }
.layerlabel button { flex: 1; height: 100%; margin: 0 2px; padding: 0 11px 2px 2px; display: flex; justify-content: space-between; align-items: center; background: var(--aqua); border: 2px solid; border-color: transparent var(--lo) var(--lo) var(--hi); border-top: 0; }
.entry { padding: 2px; }
.layerentry { width: 110px; padding-top: 0; }
.layerentry .well { height: 25px; border-top: 0; padding: 1px 0 0 5px; }
.slots { margin-left: 150px; width: 187px; padding-left: 9px; }
.slots label { padding-bottom: 3px; flex: 1; }
.option { display: flex; align-items: center; flex: 1; padding: 0 5px 0 4px; border: 2px solid; border-color: var(--hi) var(--lo) var(--lo) var(--hi); }
.slots .option { flex: none; width: 114px; height: 25px; border-top: 0; margin-right: 1px; }
.option select { flex: 1; white-space: pre; }
.option b { width: 12px; height: 7px; border: 2px solid; border-color: var(--hi) var(--lo) var(--lo) var(--hi); }
.second { height: 29px; }
.thick { width: 307px; padding: 0 2px; gap: 3px; }
.thick label { width: 163px; }
.thick .well { flex: none; width: 104px; height: 23px; padding-left: 5px; }
.params { width: 177px; padding: 1px; background: var(--green); }
.params button { flex: 1; height: 24px; text-align: left; padding-left: 4px; background: var(--aqua); border: 2px solid; border-color: var(--hi) var(--lo) var(--lo) var(--hi); }
.paramentry { width: 128px; margin-left: 2px; }
.paramentry .well { height: 25px; padding: 2px 0 0 4px; }
.tablewrap { flex: 1; min-height: 0; padding: 1px 0 0 3px; border: solid #2f6b5c; border-width: 1px 0 0 1px; border-bottom: 2px solid #a8f0dc; }
.tools { table-layout: fixed; width: 749px; border-spacing: 0; border-left: 2px solid #000; }
.c26 { width: 26px; } .c68 { width: 68px; } .c60 { width: 60px; } .c84 { width: 84px; } .c115 { width: 115px; } .c83 { width: 83px; } .c74 { width: 74px; } .c82 { width: 82px; }
.tools th { height: 37px; padding: 0; background: var(--cyan); border: solid #000; border-width: 1px 2px 1px 0; line-height: 15px; font-weight: bold; }
.tools .gap td { height: 3px; border: 0; border-bottom: 2px solid #000; }
.tools td { height: 33px; padding: 0; border: solid #000; border-width: 0 2px 2px 0; }
.tools td .well { height: 27px; margin: 1px 2px; padding-left: 2px; }
.tools td.y { background: var(--cream); }
.tools td.w { background: #fff; }
.tools td.y .well { border-color: #a5a57b #d6d6a8 #d6d6a8 #a5a57b; }
.tools td.y .option, .tools td.y .option b { border-color: #d6d6a8 #96966f #96966f #d6d6a8; }
.tools td.w .well { border-color: #999 #ccc #ccc #999; }
.tools .option { height: 28px; margin: 0 3px 0 5px; }
.tools td.num { text-align: right; padding-right: 3px; }
.tool { display: block; width: 62px; height: 28px; margin: 0 2px; padding-left: 2px; text-align: left; border: 2px solid; border-color: #a8f0dc #2f7b6c #2f7b6c #a8f0dc; }
.tool.cur { background: #ffc650; }
.sym { display: block; width: 20px; height: 20px; margin: 0 auto; border: 1px solid #000; background: linear-gradient(#000, #000) 50% 50% / 12px 1px no-repeat, linear-gradient(#000, #000) 50% 50% / 1px 12px no-repeat #fff; box-shadow: -1px -1px #fff; text-align: right; }
.sym small { display: block; font: 8px/7px "Liberation Mono", monospace; }
.hscroll { height: 21px; flex: none; padding: 2px; display: flex; border-left: 2px solid #a8f0dc; }
.hscroll i { width: 0; height: 0; margin-top: 1px; border: 6px solid transparent; border-left: 0; border-right: 12px solid #2f7b6c; }
.current { height: 38px; flex: none; border: solid #2f6b5c; border-width: 2px 0; }
.current span { display: block; width: 41px; height: 34px; padding-left: 3px; border: 1px solid #000; background: #ffc650; font-size: 12px; line-height: 29px; }
.blank { height: 33px; flex: none; }
.closebar { height: 29px; flex: none; padding: 3px; border-top: 1px solid #000; }
.closebar button { width: 100%; height: 23px; display: block; background: var(--aqua); border: 2px solid var(--hi); border-bottom-color: var(--lo); }

/* spreadsheet */
.excel { position: absolute; left: 888px; right: 0; top: 177px; bottom: 0; padding-left: 7px; border-left: 1px solid #1c3c40; border-radius: 7px 0 0 0; background: linear-gradient(90deg, rgba(200, 235, 235, .8), rgba(110, 150, 160, .5) 5px, #cfe2f5 7px); box-shadow: -3px 0 8px rgba(0, 0, 0, .55), 0 -2px 6px rgba(0, 0, 0, .4); display: flex; flex-direction: column; font: 12px/16px "Open Sans", "Noto Sans CJK SC", sans-serif; text-spacing-trim: space-all; }
.title { position: relative; display: flex; align-items: center; height: 29px; flex: none; margin-left: -7px; background: linear-gradient(rgba(215, 235, 245, .75), rgba(150, 190, 210, .6) 45%, rgba(190, 215, 235, .75)); backdrop-filter: blur(5px); border-radius: 7px 0 0 0; border-bottom: 1px solid #4d6a84; }
.orb { position: absolute; left: 9px; top: 6px; z-index: 2; width: 36px; height: 36px; border-radius: 50%; display: grid; place-items: center; background: radial-gradient(circle at 50% 35%, #fff, #e4eaf0 55%, #98a9bb); box-shadow: 0 0 0 1px #7f93a4; }
.orb svg { width: 24px; height: 24px; }
.qat { display: flex; align-items: center; gap: 7px; width: 104px; height: 24px; margin-left: 43px; padding-left: 15px; border: 1px solid #8fa9b2; border-left: 0; border-radius: 0 12px 12px 0; }
.qat svg { width: 14px; height: 14px; }
.dd { display: inline-block; width: 0; height: 0; border: 3px solid transparent; border-top-color: #5c7ba8; border-bottom: 0; flex: none; }
.dd.faint { border-top-color: #b9cdd6; }
.dd.dark { border-width: 4px 4px 0; border-top-color: #000; }
.dd.more { margin: 0 0 0 8px; border-top-color: #2a4a7a; }
.title h1 { flex: 1; margin: 0 74px 0 0; text-align: center; font: 13px/28px "Open Sans", "Noto Sans CJK SC", sans-serif; color: #111; white-space: nowrap; }
.min { position: absolute; right: 0; top: 0; width: 21px; height: 16px; border: 1px solid #4c5f6c; border-width: 0 0 1px 1px; border-radius: 0 0 0 5px; background: rgba(255, 255, 255, .4); }
.min i { display: block; width: 11px; height: 5px; margin: 3px 0 0 8px; border: 1px solid #445; background: #fff; }
.frame { flex: 1; min-height: 0; display: flex; flex-direction: column; background: #bfdbff; color: #15428b; }
.tabs { display: flex; height: 26px; flex: none; padding: 2px 0 0 38px; gap: 1px; }
.tabs a { padding: 3px 14px 0; height: 24px; font-size: 12px; line-height: 18px; }
.tabs a.on { padding: 3px 12px 0; border: 1px solid #a3c4ea; border-bottom: 0; border-radius: 3px 3px 0 0; background: #e4eef9; margin: 0 1px 0 7px; box-shadow: 0 0 2px #fff; }
.ribbon { display: flex; gap: 3px; flex: none; height: 108px; padding: 3px 0 3px 1px; background: linear-gradient(#dbe7f5, #c9daee 30%, #d3e4f7); border: solid #8db2e3; border-width: 1px 0; overflow: hidden; }
.rg { flex: none; display: flex; flex-direction: column; border: 1px solid #a9c1de; border-radius: 3px; background: linear-gradient(#dde8f5, #ccdbee 20%, #c8d9ee 50%, #d8e7f8); box-shadow: inset 0 0 0 1px #e6f0fb; overflow: hidden; }
.rg footer { position: relative; height: 20px; background: #c1d8f0; text-align: center; color: #3e6aaa; line-height: 20px; }
.rg footer.l { padding-right: 18px; }
.rg footer svg { position: absolute; right: 4px; top: 3px; width: 9px; height: 9px; }
.rc { flex: 1; min-height: 0; display: flex; padding: 3px; }
.rg svg { width: 16px; height: 16px; }
.rg svg.i30 { width: 28px; height: 30px; }
.clip { width: 73px; } .font { width: 152px; } .align { width: 111px; } .number { width: 88px; } .styles { width: 116px; } .cells { width: 68px; } .edit { width: 125px; }
.big { display: flex; flex-direction: column; align-items: center; line-height: 18px; }
.clip .big { padding: 1px 6px 0 8px; line-height: 28px; }
.clip .rc { justify-content: space-between; }
.stack { display: flex; flex-direction: column; gap: 6px; padding: 2px 3px; }
.rc.rows { flex-direction: column; gap: 3px; padding-top: 2px; }
.line { display: flex; gap: 3px; height: 22px; }
.font .line:first-child, .number .line:first-child { height: 25px; }
.align .line { height: 23px; }
.line.joined { gap: 1px; }
.combo { display: flex; align-items: center; padding: 0 4px 0 3px; height: 25px; background: #eef4fb; border: 1px solid #b5cbe7; color: #000; }
.combo select { flex: 1; font-size: 12px; }
.fname { width: 96px; } .fsize { width: 46px; } .fnum { width: 80px; }
.bar { display: flex; height: 22px; border: 1px solid #99b6dc; border-radius: 2px; background: linear-gradient(#d9e6f5, #c6d8ee); color: #222; }
.bar.bare { border-color: transparent; background: none; }
.bar.wide { width: 80px; }
.bar button { display: flex; align-items: center; justify-content: center; gap: 4px; padding: 0 3px; flex: 1; font: 14px/18px "Liberation Serif", serif; }
.bar.b80 { width: 80px; }
.bar button + button { box-shadow: inset 1px 0 #b4cbe6; }
.bar button.hot { background: linear-gradient(#f8c88a, #fbb14c 50%, #ffe28e); box-shadow: inset 0 0 0 1px #c99a4f; }
.b80 button { font-size: 14px; }
.ga { font-size: 16px; } .gb { font-size: 13px; }
.du { width: 0; height: 0; margin: -8px 0 0 -3px; border: 3px solid transparent; border-top: 0; border-bottom-color: #2b579a; }
.du.dn { border-top: 3px solid #2b579a; border-bottom: 0; }
.wen { display: flex; flex-direction: column; align-items: center; font: 11px/10px "Noto Sans CJK SC", sans-serif; color: #1f3fa8; }
.wen span { font: 10px/9px "Open Sans", sans-serif; color: #222; }
.dec span { font: bold 8px/8px "Open Sans", sans-serif; }
.bar .dec { width: 21px; padding: 0; flex: none; }
.list { display: flex; flex-direction: column; gap: 6px; padding-top: 4px; }
.list button { display: flex; align-items: center; gap: 3px; white-space: nowrap; height: 16px; }
.list button .dd { margin-left: 2px; }
.sigma { width: 16px; text-align: center; font: bold 15px/16px "Liberation Serif", serif; color: #111; }
.styles .rc, .cells .rc { padding: 4px 3px 0 6px; }
.edit .rc { gap: 4px; padding: 2px 7px; }
.edit .list { padding-top: 2px; }
.formula { display: flex; height: 23px; flex: none; padding: 3px 0 1px; background: #c4daf5; border-bottom: 1px solid #7c9cc6; color: #000; font: 16px/18px "Liberation Serif", "Noto Sans CJK SC", serif; }
.namebox { width: 158px; display: flex; align-items: center; background: #fff; padding: 0 6px 0 1px; }
.namebox input { flex: 1; text-align: center; padding-right: 8px; }
.fx { display: flex; align-items: center; justify-content: space-between; width: 77px; padding: 0 5px; background: linear-gradient(#e4effb, #a9c5e8); border-right: 1px solid #7c9cc6; border-radius: 9px 0 0 9px; }
.fx i { width: 9px; height: 9px; border-radius: 50%; background: #aebccb; }
.fx em { color: #444; font-weight: bold; font-size: 14px; }
.fin { flex: 1; background: #fff; padding-left: 9px; }
.grid { flex: 1; min-height: 0; overflow: hidden; background: #fff; margin-top: 3px; color: #000; }
.grid table { width: calc(100% + 24px); table-layout: fixed; border-spacing: 0; font: 16px/18px "Liberation Serif", "Noto Sans CJK SC", serif; }
.cn { width: 33px; } .ca { width: 148px; }
.grid thead th { height: 20px; padding: 0; font-weight: normal; line-height: 18px; background: linear-gradient(#f4f8fc, #d3dfee); border: 1px solid #9eb6ce; border-width: 1px 1px 1px 0; color: #27413e; }
.grid thead .corner { background: linear-gradient(135deg, transparent 60%, #e8f0fa 60%), #a9c4e9; }
.grid thead .hotcol { background: linear-gradient(#f9d9a0, #f2b75c); border-color: #f29536; }
.grid tbody th { height: 19px; padding: 0 8px 0 0; text-align: right; font-weight: normal; background: #e4ecf7; border: solid #9eb6ce; border-width: 0 1px 1px 0; color: #27413e; vertical-align: bottom; }
.grid td { height: 19px; padding: 0 0 0 1px; border-bottom: 1px solid #000; white-space: pre; overflow: hidden; }
.grid td.b { border-left: 2px solid #000; }
.grid td.hl { background: #ff0; }
.grid .cjk { font-family: "Noto Sans CJK SC", sans-serif; }
.grid tr.tall th, .grid tr.tall td { height: 57px; }
.grid tr.tall td { line-height: 18px; }
.grid tr.sel th { background: #f9c98a; border-color: #f29536; }
.grid tr.sel td.b { border-left: 1px solid #2222b0; box-shadow: inset 0 -1px #fff, inset 0 1px #fff; padding-left: 2px; }

.mark { position: absolute; border: 2px solid #dd1414; box-shadow: 3px 3px 5px rgba(0, 0, 0, .5), inset 2px 2px 4px rgba(0, 0, 0, .35); }
.m1 { left: 874px; top: 88px; width: 545px; height: 46px; }
.m2 { left: 908px; top: 470px; width: 322px; height: 32px; }
.m3 { left: 906px; top: 659px; width: 247px; height: 30px; }

/* taskbar */
.taskbar { position: relative; display: flex; height: 29px; flex: none; gap: 4px; padding-left: 60px; background: linear-gradient(#1b3040 0 1px, rgba(255, 255, 255, .25) 1px, transparent 60%), linear-gradient(90deg, #2c6a92, #3479a6 20%, #3f7ba5 52%, #7f9ab4 62%, #8aa5c2 80%, #7d9cbd); color: #fff; font: 12px/16px "Open Sans", "Noto Sans CJK SC", sans-serif; }
.start { position: absolute; left: 9px; top: -5px; width: 36px; height: 36px; border-radius: 50%; display: grid; place-items: center; background: radial-gradient(circle at 50% 90%, #6fd3e8, #2e6d94 45%, #2b4a66 70%, #8fb0c4); box-shadow: 0 0 0 1px #1f3a50, inset 0 2px 4px #d8ecf4; }
.start svg { width: 24px; height: 24px; }
.task { display: flex; align-items: center; gap: 4px; width: 77px; height: 29px; padding-left: 6px; white-space: nowrap; border: 1px solid rgba(20, 40, 60, .75); border-bottom: 0; border-radius: 2px; background: linear-gradient(135deg, rgba(255, 255, 255, .55), rgba(255, 255, 255, .18) 50%, rgba(255, 255, 255, .12)); box-shadow: inset 0 0 0 1px rgba(255, 255, 255, .35); text-shadow: 0 0 3px rgba(0, 0, 0, .5); overflow: hidden; }
.task svg { width: 16px; height: 16px; }
.task.on { background: linear-gradient(135deg, rgba(255, 255, 255, .75), rgba(255, 255, 255, .4)); }
.tg { display: flex; }
.tg:nth-of-type(7) .task { width: 78px; }
.pin { width: 35px; display: grid; place-items: center; }
.pin svg { width: 15px; height: 15px; }
.tray { display: flex; align-items: center; margin-left: auto; gap: 13px; }
.tray svg { width: 16px; height: 16px; }
.tray .lang { width: 10px; height: 18px; }
.tray .up { width: 10px; height: 6px; }
.help { width: 15px; height: 15px; border-radius: 50%; background: #0a18a0; border: 1px solid #c8d0f0; font: bold 12px/13px "Open Sans", sans-serif; text-align: center; }
.peek { width: 14px; height: 28px; border: 1px solid #4b6580; background: rgba(255, 255, 255, .25); }
</style>
